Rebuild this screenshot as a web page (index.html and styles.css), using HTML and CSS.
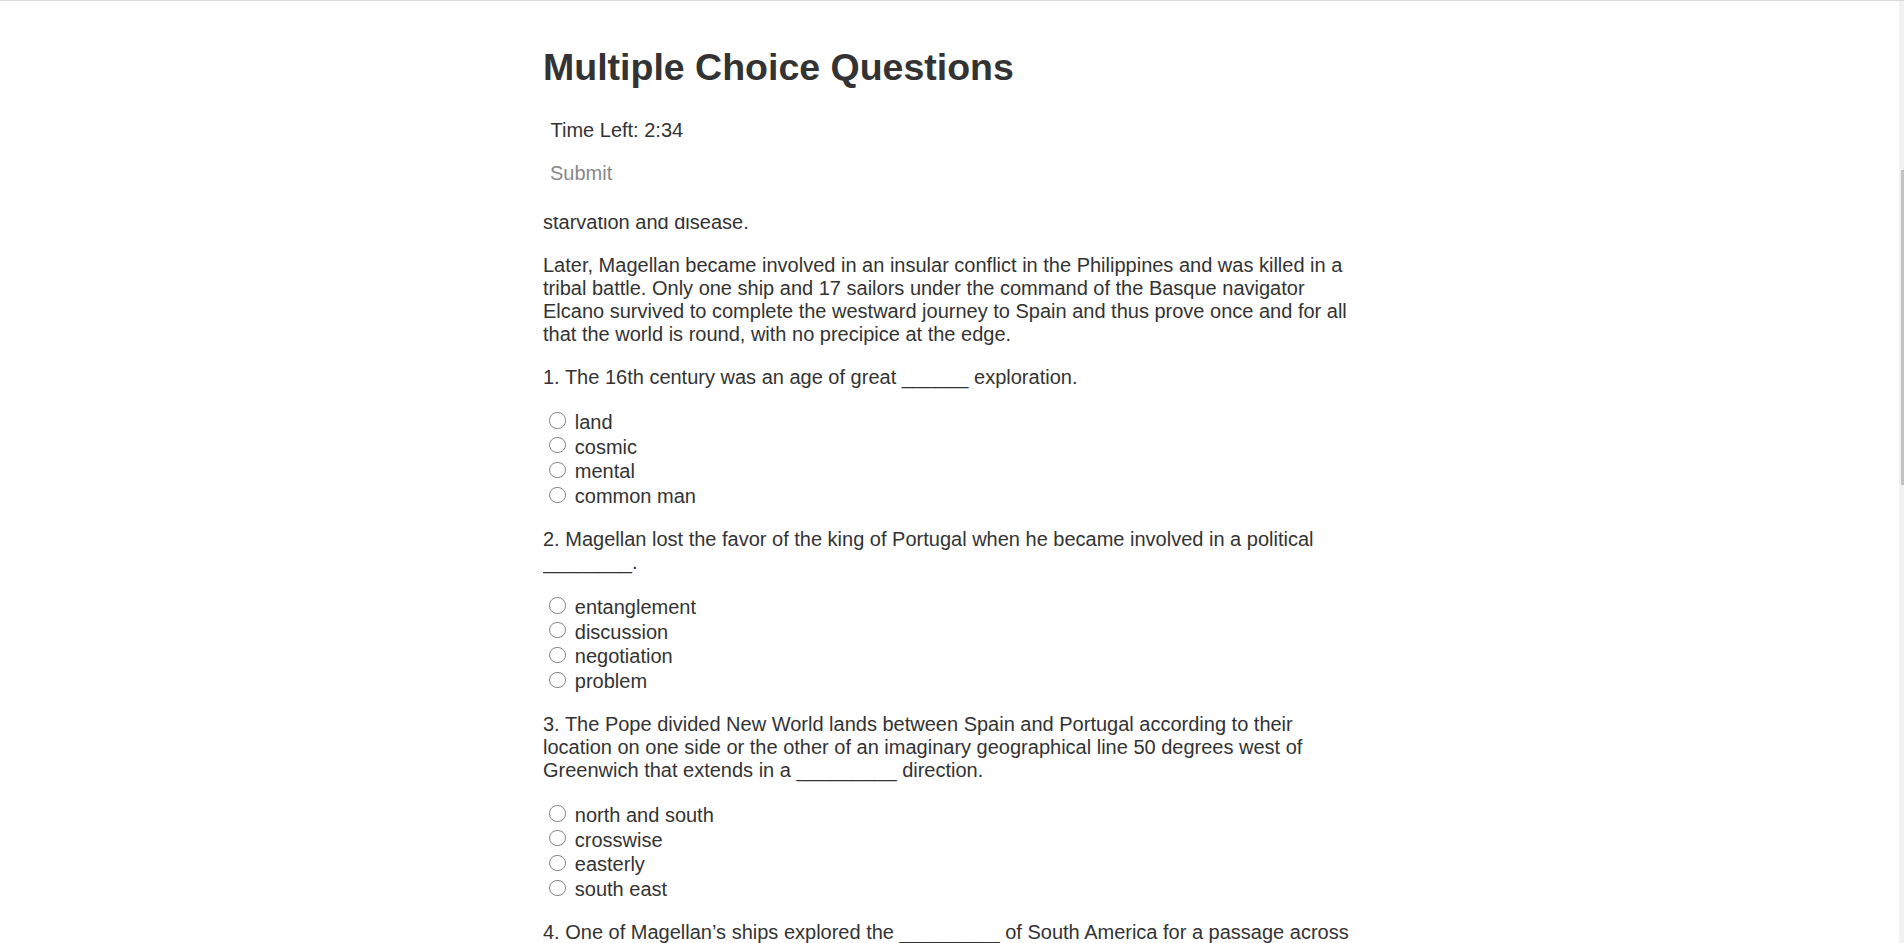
FILE: index.html
```html
<!DOCTYPE html>
<html lang="en">
<head>
<meta charset="utf-8">
<title>Multiple Choice Questions</title>
<link rel="stylesheet" href="styles.css">
</head>
<body>
<div class="quiz">
  <header class="quiz-head">
    <h1 class="quiz-title">Multiple Choice Questions</h1>
    <div class="timer">Time Left: 2:34</div>
    <button class="submit" type="button" disabled>Submit</button>
  </header>
  <main class="quiz-body">
    <div class="passage">
      <p>starvation and disease.</p>
      <p>Later, Magellan became involved in an insular conflict in the Philippines and was killed in a tribal battle. Only one ship and 17 sailors under the command of the Basque navigator Elcano survived to complete the westward journey to Spain and thus prove once and for all that the world is round, with no precipice at the edge.</p>

      <p class="question">1. The 16th century was an age of great ______ exploration.</p>
      <div class="options">
        <label class="option"><input type="radio" name="q1"> land</label>
        <label class="option"><input type="radio" name="q1"> cosmic</label>
        <label class="option"><input type="radio" name="q1"> mental</label>
        <label class="option"><input type="radio" name="q1"> common man</label>
      </div>

      <p class="question">2. Magellan lost the favor of the king of Portugal when he became involved in a political ________.</p>
      <div class="options">
        <label class="option"><input type="radio" name="q2"> entanglement</label>
        <label class="option"><input type="radio" name="q2"> discussion</label>
        <label class="option"><input type="radio" name="q2"> negotiation</label>
        <label class="option"><input type="radio" name="q2"> problem</label>
      </div>

      <p class="question">3. The Pope divided New World lands between Spain and Portugal according to their location on one side or the other of an imaginary geographical line 50 degrees west of Greenwich that extends in a _________ direction.</p>
      <div class="options">
        <label class="option"><input type="radio" name="q3"> north and south</label>
        <label class="option"><input type="radio" name="q3"> crosswise</label>
        <label class="option"><input type="radio" name="q3"> easterly</label>
        <label class="option"><input type="radio" name="q3"> south east</label>
      </div>

      <p class="question">4. One of Magellan’s ships explored the _________ of South America for a passage across</p>
    </div>
  </main>
</div>
<div class="scrollbar" aria-hidden="true"><div class="scrollbar-thumb"></div></div>
</body>
</html>
```
FILE: styles.css
```css
html, body {
  margin: 0;
  height: 100%;
}

body {
  box-sizing: border-box;
  border-top: 1px solid #dadada;
  overflow: hidden;
  background: #fff;
  color: #333;
  font-family: "Liberation Sans", Arial, sans-serif;
  font-size: 20px;
  line-height: normal;
}

.quiz {
  width: 818px;
  height: 100%;
  margin: 0 auto;
  display: flex;
  flex-direction: column;
}

.quiz-head {
  flex: none;
  padding: 45px 0 32.2px;
}

.quiz-title {
  margin: 0;
  font-size: 37.5px;
  line-height: normal;
  font-weight: bold;
  color: #333;
}

.timer {
  margin-top: 29.7px;
  padding-left: 7.5px;
}

.submit {
  display: block;
  margin: 20px 0 0;
  padding: 0 7px;
  border: 0;
  background: none;
  font: inherit;
  line-height: normal;
  color: #888;
  cursor: default;
}

.quiz-body {
  flex: 1;
  min-height: 0;
  overflow: hidden;
}

.passage {
  margin-top: -6px;
}

.passage p {
  margin: 0 0 20px;
}

.options {
  margin: 0 0 20px;
}

.option {
  display: block;
}

.option input {
  appearance: none;
  -webkit-appearance: none;
  box-sizing: border-box;
  width: 16.25px;
  height: 16.25px;
  margin: 3.5px 3.75px 0 6.25px;
  border: 1.1px solid #858585;
  border-radius: 50%;
  background: #fff;
  vertical-align: baseline;
}

.scrollbar {
  position: fixed;
  top: 1px;
  right: 0;
  bottom: 0;
  width: 5px;
  box-sizing: border-box;
  padding-top: 169px;
  background: #f1f1f1;
}

.scrollbar-thumb {
  margin-left: 2px;
  height: 315px;
  background: #c1c1c1;
}
```
